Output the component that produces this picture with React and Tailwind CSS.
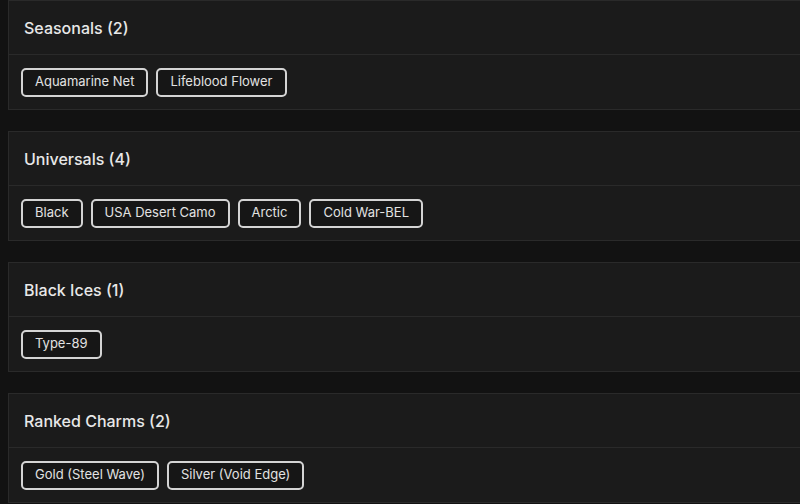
const groups = [
  { title: "Seasonals", items: ["Aquamarine Net", "Lifeblood Flower"] },
  { title: "Universals", items: ["Black", "USA Desert Camo", "Arctic", "Cold War-BEL"] },
  { title: "Black Ices", items: ["Type-89"] },
  { title: "Ranked Charms", items: ["Gold (Steel Wave)", "Silver (Void Edge)"] },
];

function Group({ title, items }) {
  return (
    <div className="border border-[#2a2a2a] bg-[#1b1b1b] -mr-2">
      <div className="h-[54px] flex items-center pl-[15px] pt-[1px] border-b border-[#2a2a2a] text-[16px] font-medium text-[#e8e8e8]">
        {title} ({items.length})
      </div>
      <div className="h-[54px] flex items-center gap-2 px-3">
        {items.map((item) => (
          <div
            key={item}
            className="h-[29px] flex items-center px-3 border-2 border-[#d4d4d4] rounded-[5px] bg-[#161616] text-[13px] text-[#e2e2e2]"
          >
            {item}
          </div>
        ))}
      </div>
    </div>
  );
}

export default function App() {
  return (
    <div
      className="min-h-screen bg-[#121212] pl-2 overflow-hidden flex flex-col gap-[21px]"
      style={{ fontFamily: "Inter, 'Noto Sans', sans-serif" }}
    >
      {groups.map((g) => (
        <Group key={g.title} {...g} />
      ))}
    </div>
  );
}
